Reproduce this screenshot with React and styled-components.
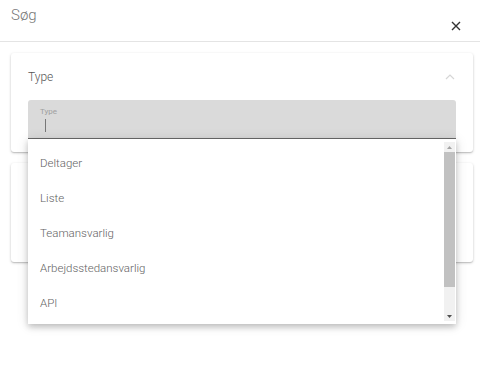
import React from "react";
import styled, { createGlobalStyle } from "styled-components";

const Global = createGlobalStyle`
  html, body {
    margin: 0;
    padding: 0;
    background: #fff;
    font-family: Roboto, "Noto Sans", sans-serif;
  }
`;

const Dialog = styled.div`
  width: 480px;
  height: 382px;
  background: #fff;
  overflow: hidden;
`;

const Header = styled.div`
  height: 42px;
  border-bottom: 1px solid #e4e4e4;
  display: flex;
  justify-content: space-between;
  padding: 0 17px 0 11px;
  box-sizing: border-box;
`;

const Title = styled.h2`
  margin: 0;
  padding-top: 6px;
  font-size: 15px;
  font-weight: 300;
  color: #777;
  line-height: 18px;
`;

const Close = styled.button`
  border: 0;
  background: none;
  padding: 0;
  margin-top: 19px;
  width: 14px;
  height: 14px;
  display: flex;
  align-items: center;
  justify-content: center;
  color: #333;
`;

const Body = styled.div`
  padding: 11px 7px 0 11px;
  display: flex;
  flex-direction: column;
  gap: 11px;
`;

const Card = styled.div`
  position: relative;
  height: 99px;
  background: #fff;
  border-radius: 3px;
  box-shadow: 0 1px 3px rgba(0, 0, 0, 0.2), 0 1px 1px rgba(0, 0, 0, 0.12);
  padding: 0 17px;
  box-sizing: border-box;
`;

const CardHead = styled.div`
  height: 47px;
  display: flex;
  align-items: center;
  justify-content: space-between;
  font-size: 12px;
  font-weight: 300;
  color: #555;
`;

const Field = styled.div`
  position: relative;
  height: 39px;
  background: #dadada;
  border-radius: 3px 3px 0 0;
  border-bottom: 1px solid #6a6a6a;
  box-sizing: border-box;
  padding: 7px 12px 0;
`;

const Label = styled.div`
  font-size: 8px;
  line-height: 10px;
  color: #a0a0a0;
`;

const Caret = styled.div`
  width: 1px;
  height: 13px;
  margin: 2px 0 0 5px;
  background: #777;
`;

const Menu = styled.div`
  position: absolute;
  top: 39px;
  left: 0;
  right: 0;
  height: 185px;
  background: #fff;
  box-shadow: 0 3px 6px rgba(0, 0, 0, 0.2), 0 1px 12px rgba(0, 0, 0, 0.12);
  display: flex;
  z-index: 2;
`;

const List = styled.ul`
  flex: 1;
  margin: 0;
  padding: 6px 0 0;
  list-style: none;
`;

const Item = styled.li`
  height: 35px;
  display: flex;
  align-items: center;
  padding-left: 12px;
  font-size: 11.5px;
  font-weight: 300;
  color: #636363;
`;

const Track = styled.div`
  width: 11px;
  margin: 3px 1px 3px 0;
  background: #f1f1f1;
  display: flex;
  flex-direction: column;
  align-items: center;
`;

const Arrow = styled.div`
  height: 10px;
  display: flex;
  align-items: center;
  justify-content: center;
  width: 100%;
`;

const Thumb = styled.div`
  width: 100%;
  height: 135px;
  background: #c1c1c1;
`;

const Spacer = styled.div`
  flex: 1;
`;

const items = ["Deltager", "Liste", "Teamansvarlig", "Arbejdsstedansvarlig", "API"];

const App = () => {
  return (
    <>
      <Global />
      <Dialog>
        <Header>
          <Title>Søg</Title>
          <Close>
            <svg width="10" height="10" viewBox="0 0 10 10">
              <path d="M1 1L9 9M9 1L1 9" stroke="#333" strokeWidth="1.4" />
            </svg>
          </Close>
        </Header>
        <Body>
          <Card>
            <CardHead>
              Type
              <svg width="12" height="8" viewBox="0 0 12 8">
                <path d="M2 6L6 2L10 6" fill="none" stroke="#d6d6d6" strokeWidth="1.2" />
              </svg>
            </CardHead>
            <Field>
              <Label>Type</Label>
              <Caret />
              <Menu>
                <List>
                  {items.map((it) => (
                    <Item key={it}>{it}</Item>
                  ))}
                </List>
                <Track>
                  <Arrow>
                    <svg width="5" height="3" viewBox="0 0 5 3">
                      <path d="M0 3L2.5 0L5 3Z" fill="#a3a3a3" />
                    </svg>
                  </Arrow>
                  <Thumb />
                  <Spacer />
                  <Arrow>
                    <svg width="5" height="3" viewBox="0 0 5 3">
                      <path d="M0 0L2.5 3L5 0Z" fill="#505050" />
                    </svg>
                  </Arrow>
                </Track>
              </Menu>
            </Field>
          </Card>
          <Card />
        </Body>
      </Dialog>
    </>
  );
};

export default App;
